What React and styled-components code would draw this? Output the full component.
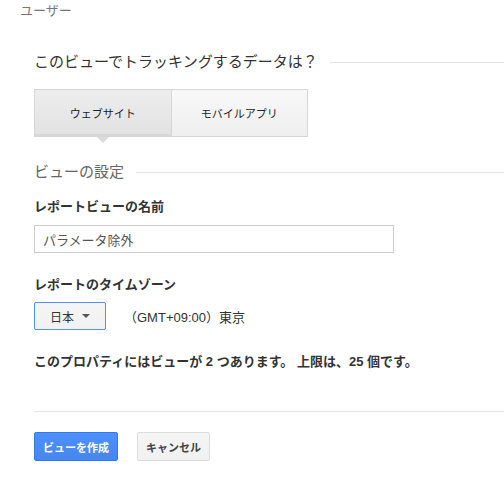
import styled, { createGlobalStyle } from "styled-components";

const GlobalStyle = createGlobalStyle`
  body {
    margin: 0;
    background: #fff;
    font-family: Arial, "Liberation Sans", "Noto Sans CJK JP", sans-serif;
    color: #222;
  }
`;

const Page = styled.div`
  width: 504px;
  height: 486px;
  overflow: hidden;
`;

const Crumb = styled.div`
  padding: 3px 0 0 20px;
  font-size: 13px;
  line-height: 16px;
  color: #777;
`;

const Form = styled.div`
  padding: 32px 0 0 34px;
`;

const SectionTitle = styled.div`
  display: flex;
  align-items: center;
  gap: 12px;
  font-size: 15px;
  line-height: 22px;
  color: ${ ( { muted } ) => muted ? "#666" : "#333" };
  margin-top: ${ ( { top } ) => top || 0 }px;
  &::after {
    content: "";
    flex: 1;
    height: 1px;
    background: #e5e5e5;
  }
`;

const Tabs = styled.div`
  display: flex;
  margin-top: 16px;
  width: 274px;
`;

const Tab = styled.div`
  position: relative;
  flex: 1;
  height: 46px;
  display: flex;
  align-items: center;
  justify-content: center;
  font-size: 11px;
  color: #222;
  border: 1px solid #d6d6d6;
  border-left-width: ${ ( { active } ) => active ? 1 : 0 }px;
  background: ${ ( { active } ) => active
    ? "linear-gradient(#ededed, #e2e2e2)"
    : "linear-gradient(#f8f8f8, #efefef)" };
  box-shadow: ${ ( { active } ) => active ? "inset 0 -2px 0 #d8d8d8" : "none" };
  &::after {
    content: "";
    display: ${ ( { active } ) => active ? "block" : "none" };
    position: absolute;
    left: 50%;
    bottom: -7px;
    margin-left: -6px;
    border-left: 6px solid transparent;
    border-right: 6px solid transparent;
    border-top: 6px solid #dcdcdc;
  }
`;

const Label = styled.div`
  font-size: 13px;
  font-weight: bold;
  line-height: 18px;
  color: #333;
  margin-top: ${ ( { top } ) => top }px;
`;

const TextInput = styled.input`
  display: block;
  box-sizing: border-box;
  width: 360px;
  height: 28px;
  margin-top: 9px;
  padding: 0 8px;
  border: 1px solid #ccc;
  font-family: inherit;
  font-size: 13px;
  color: #555;
  outline: none;
`;

const ZoneRow = styled.div`
  display: flex;
  align-items: center;
  gap: 18px;
  margin-top: 8px;
`;

const Dropdown = styled.div`
  box-sizing: border-box;
  width: 72px;
  height: 28px;
  display: flex;
  align-items: center;
  justify-content: center;
  gap: 8px;
  border: 1px solid #4d90fe;
  border-radius: 2px;
  background: linear-gradient(#f5f5f5, #f1f1f1);
  font-size: 12px;
  color: #333;
  &::after {
    content: "";
    border-left: 4px solid transparent;
    border-right: 4px solid transparent;
    border-top: 4px solid #555;
  }
`;

const ZoneText = styled.span`
  font-size: 13px;
  color: #333;
`;

const Note = styled.div`
  font-size: 13px;
  font-weight: bold;
  color: #333;
  line-height: 18px;
  margin-top: 23px;
`;

const Divider = styled.div`
  height: 1px;
  background: #e5e5e5;
  margin-top: 40px;
`;

const Actions = styled.div`
  display: flex;
  gap: 19px;
  margin-top: 20px;
`;

const Button = styled.button`
  box-sizing: border-box;
  height: 29px;
  width: ${ ( { primary } ) => primary ? 84 : 73 }px;
  padding: 0;
  border-radius: 2px;
  font-family: inherit;
  font-size: 11px;
  font-weight: bold;
  border: 1px solid ${ ( { primary } ) => primary ? "#3079ed" : "#dcdcdc" };
  color: ${ ( { primary } ) => primary ? "#fff" : "#444" };
  background: ${ ( { primary } ) => primary
    ? "linear-gradient(#4d90fe, #4787ed)"
    : "linear-gradient(#f5f5f5, #f1f1f1)" };
`;

export default function App() {
  return <Page>
    <GlobalStyle />
    <Crumb>ユーザー</Crumb>
    <Form>
      <SectionTitle>このビューでトラッキングするデータは？</SectionTitle>
      <Tabs>
        <Tab active>ウェブサイト</Tab>
        <Tab>モバイルアプリ</Tab>
      </Tabs>
      <SectionTitle muted top={ 24 }>ビューの設定</SectionTitle>
      <Label top={ 15 }>レポートビューの名前</Label>
      <TextInput defaultValue="パラメータ除外" />
      <Label top={ 23 }>レポートのタイムゾーン</Label>
      <ZoneRow>
        <Dropdown>日本</Dropdown>
        <ZoneText>（GMT+09:00）東京</ZoneText>
      </ZoneRow>
      <Note>このプロパティにはビューが 2 つあります。 上限は、25 個です。</Note>
      <Divider />
      <Actions>
        <Button primary>ビューを作成</Button>
        <Button>キャンセル</Button>
      </Actions>
    </Form>
  </Page>;
}
